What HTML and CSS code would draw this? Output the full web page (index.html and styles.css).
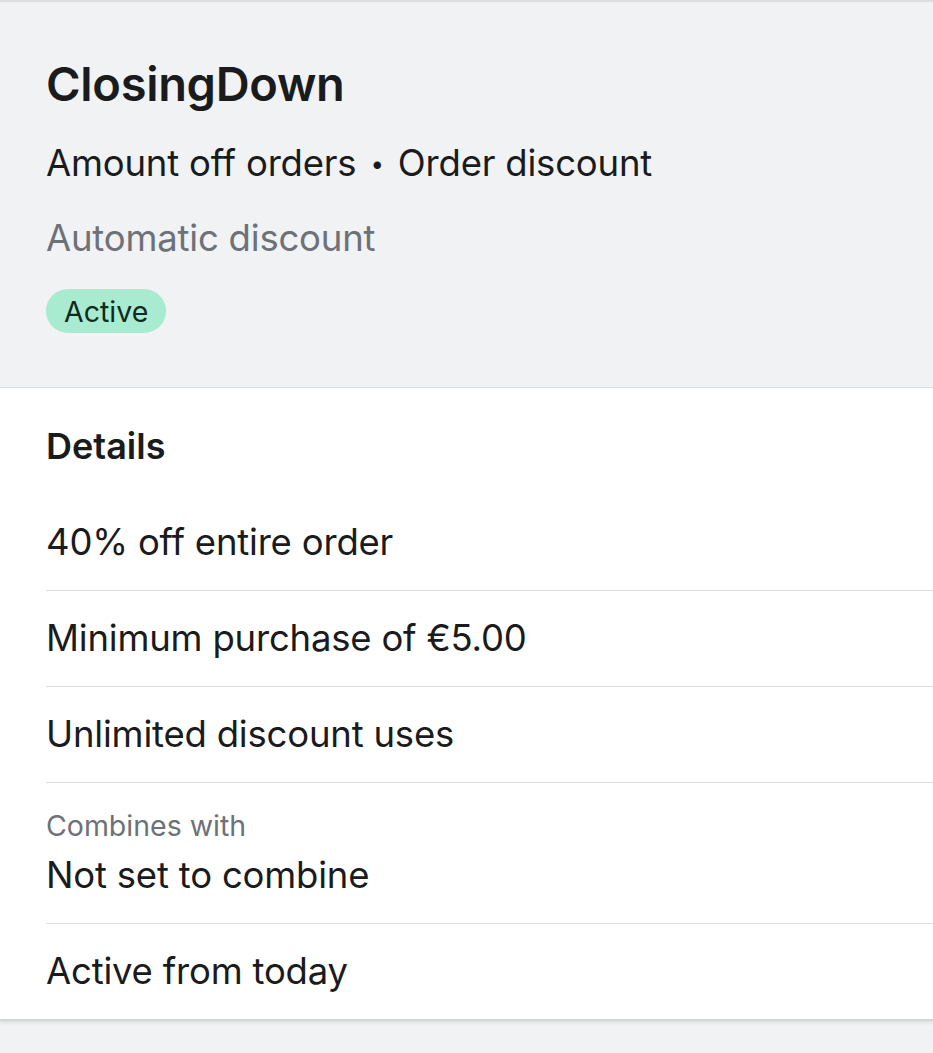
FILE: index.html
```html
<!DOCTYPE html>
<html>
<head>
<meta charset="utf-8">
<link rel="stylesheet" href="styles.css">
</head>
<body>
<div class="page">
  <header class="hero">
    <h1 class="title">ClosingDown</h1>
    <p class="subtitle">Amount off orders <span class="dot">•</span> Order discount</p>
    <p class="method">Automatic discount</p>
    <span class="badge">Active</span>
  </header>
  <section class="card">
    <h2 class="card-title">Details</h2>
    <ul class="rows">
      <li class="row">40% off entire order</li>
      <li class="row">Minimum purchase of €5.00</li>
      <li class="row">Unlimited discount uses</li>
      <li class="row row-stack"><span class="label">Combines with</span><span>Not set to combine</span></li>
      <li class="row">Active from today</li>
    </ul>
  </section>
</div>
</body>
</html>
```

FILE: styles.css
```css
* { box-sizing: border-box; }
html, body { margin: 0; padding: 0; }
body {
  background: #f1f2f4;
  font-family: Inter, "Noto Sans", sans-serif;
  color: #1a1b1d;
  width: 933px;
  height: 1053px;
  overflow: hidden;
}
.page {
  border-top: 2px solid #dcdde0;
}
.hero {
  padding: 54px 46px 54px;
  border-bottom: 1px solid #dcdde0;
  display: flex;
  flex-direction: column;
  align-items: flex-start;
}
.title {
  margin: 0;
  font-size: 47px;
  font-weight: 600;
  line-height: 56px;
  letter-spacing: -0.3px;
}
.subtitle {
  margin: 29px 0 0;
  font-size: 36.5px;
  line-height: 44px;
  letter-spacing: -0.2px;
}
.dot {
  font-size: 24px;
  vertical-align: 4px;
  padding: 0 4px;
}
.method {
  margin: 30px 0 0;
  font-size: 36.5px;
  line-height: 44px;
  color: #6d7178;
  letter-spacing: -0.2px;
}
.badge {
  margin-top: 29px;
  background: #a8ebd0;
  border-radius: 22px;
  height: 44px;
  padding: 0 18px;
  display: flex;
  align-items: center;
  font-size: 28.5px;
  color: #0f2a20;
}
.card {
  background: #fff;
  padding: 36px 0 0 46px;
  border-bottom: 2px solid #d4d5d8;
  box-shadow: 0 2px 3px rgba(0,0,0,0.08);
}
.card-title {
  margin: 0 0 52px;
  font-size: 36px;
  font-weight: 600;
  line-height: 44px;
}
.rows {
  list-style: none;
  margin: 0;
  padding: 0;
}
.row {
  font-size: 36.5px;
  line-height: 45px;
  padding: 25px 0;
  border-top: 1px solid #dcdde0;
  letter-spacing: -0.2px;
}
.row:first-child { border-top: none; padding-top: 0; }
.row-stack {
  display: flex;
  flex-direction: column;
  padding-top: 27px;
}
.label {
  font-size: 28.5px;
  line-height: 32px;
  color: #6d7178;
  margin-bottom: 11px;
  letter-spacing: 0;
}
```
